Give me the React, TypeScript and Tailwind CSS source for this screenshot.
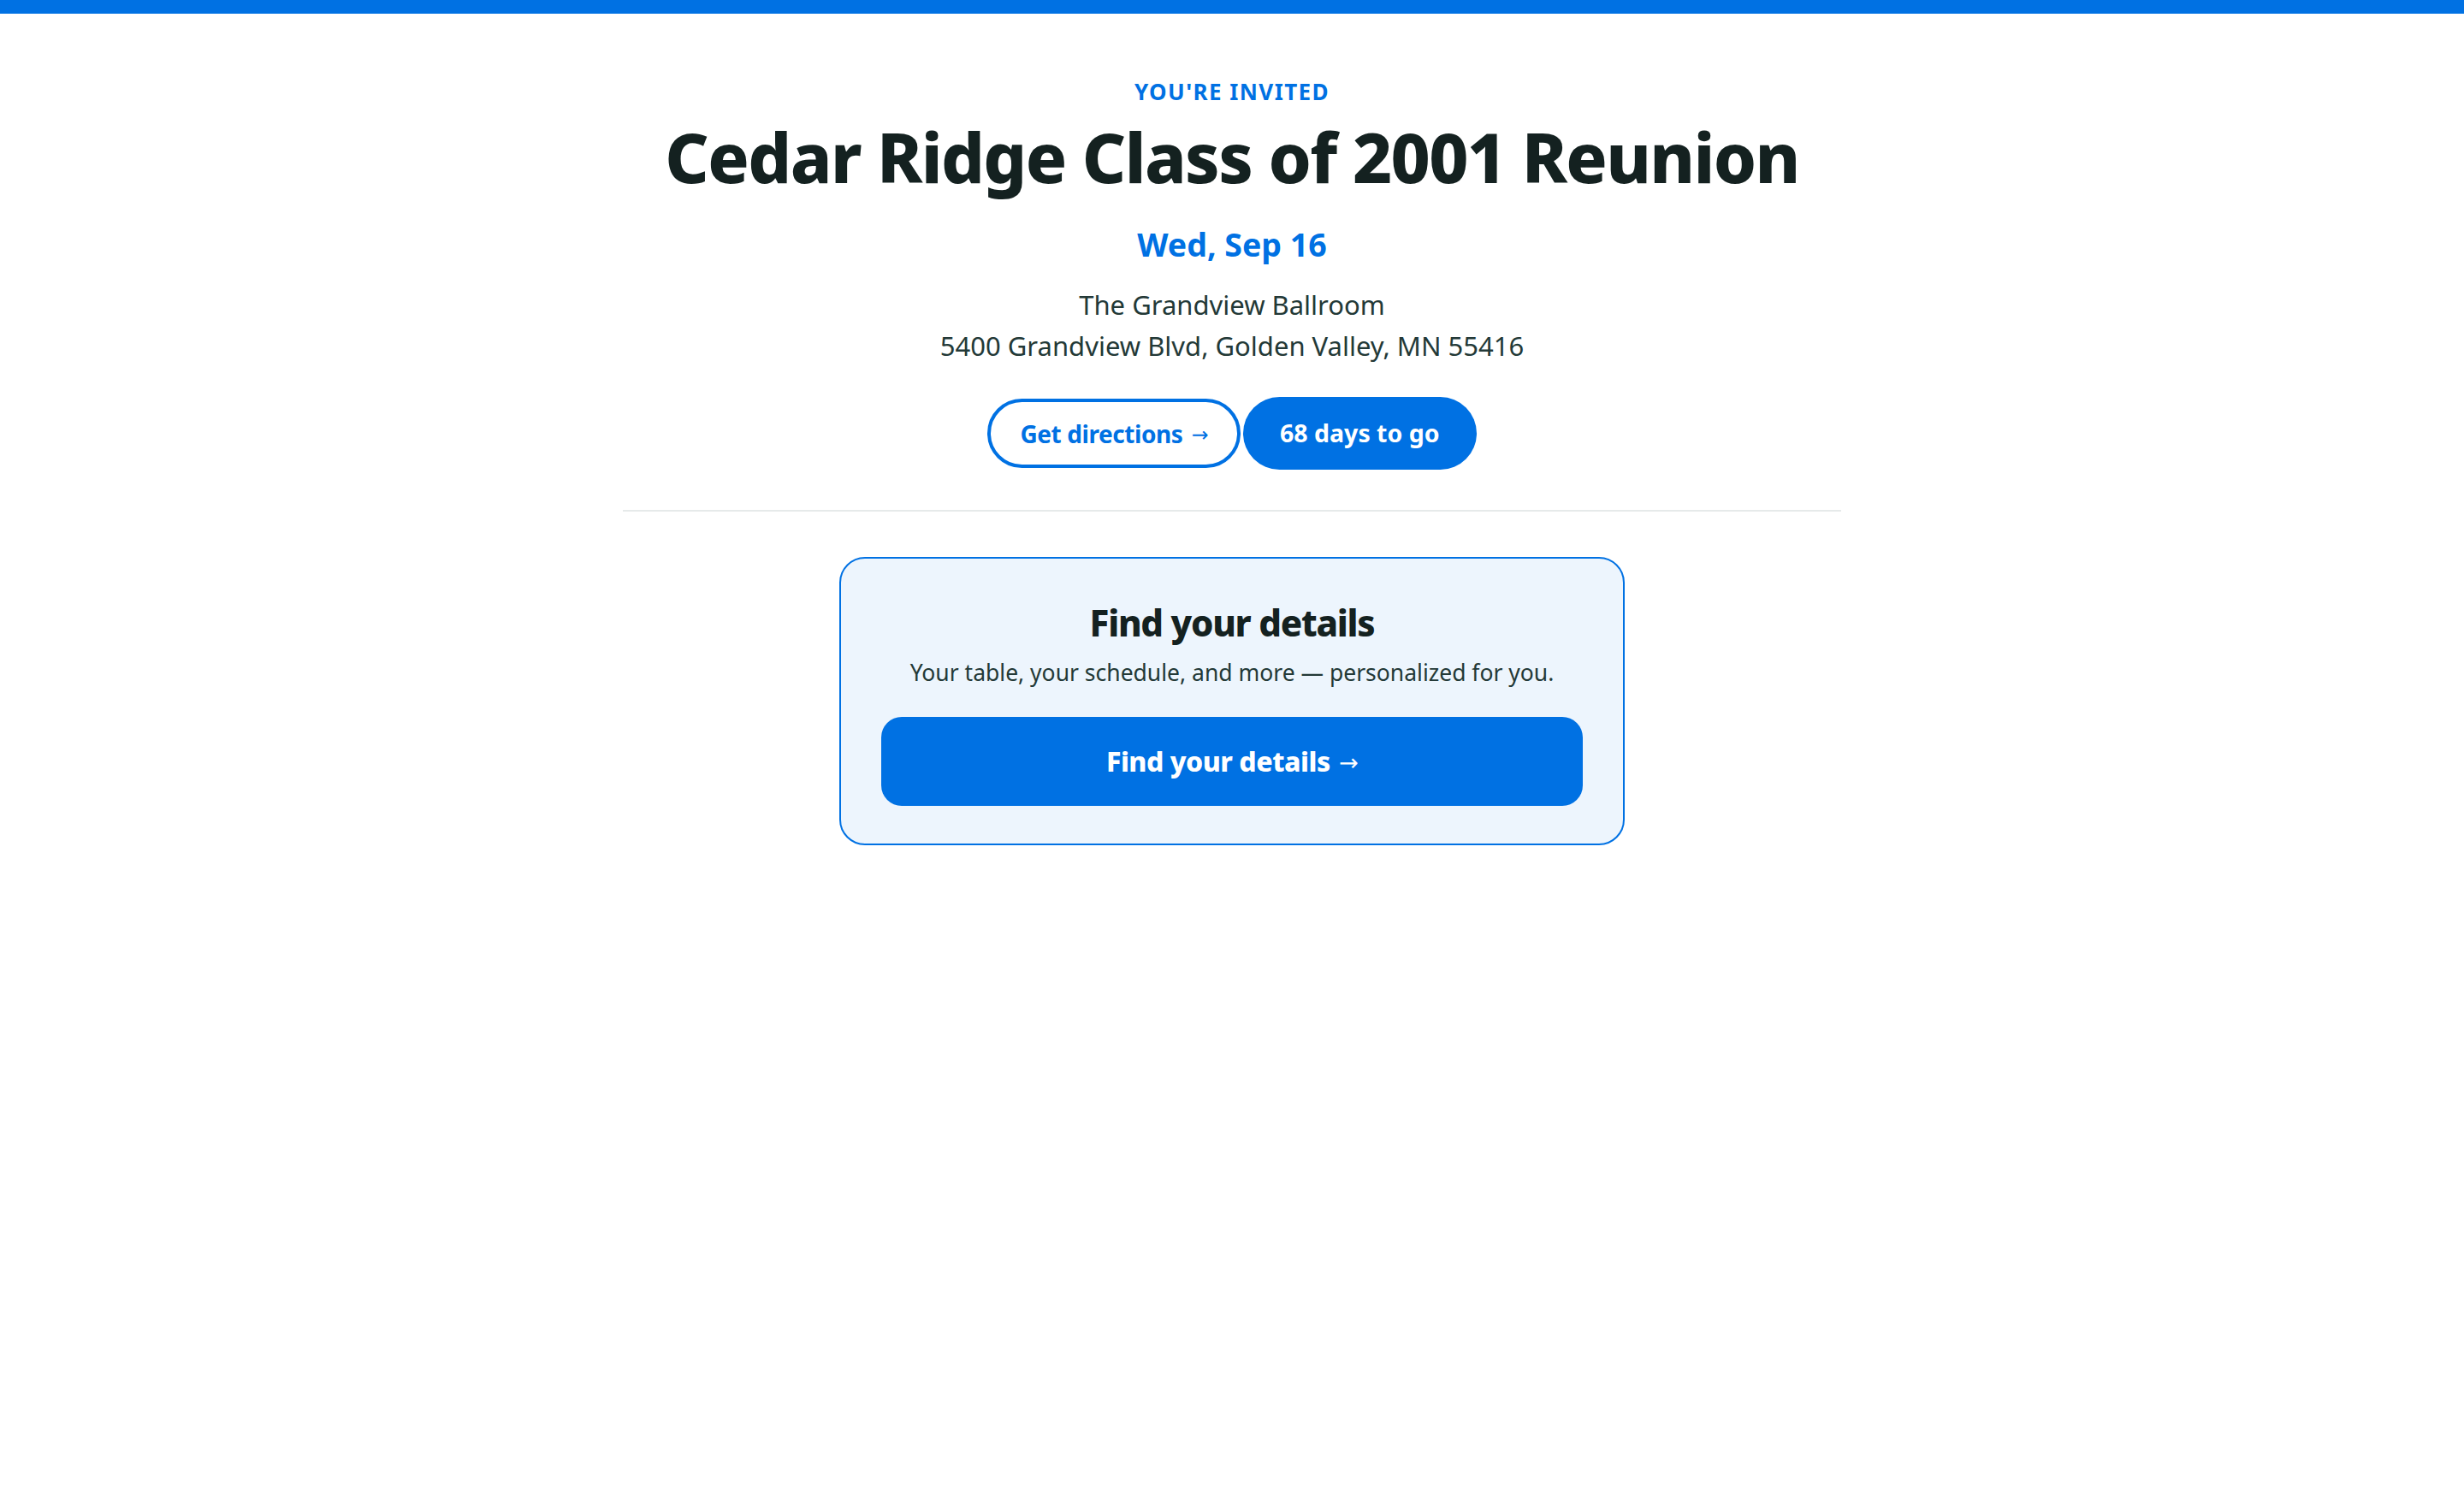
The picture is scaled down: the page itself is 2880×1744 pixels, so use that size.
import React from "react"

const daysToGo = 68

// Arrow glyph from a face whose arrow sits on the x-height centre
function Arrow() {
  return (
    <span className="relative top-[2px] ml-[10px] font-['DejaVu_Sans',sans-serif] text-[0.85em] font-normal">→</span>
  )
}

export default function App() {
  return (
    <div className="min-h-screen bg-white font-['Noto_Sans',sans-serif] text-[#142120]">
      <div className="h-4 bg-[#0071e3]" />

      <main className="mx-auto flex w-[1424px] flex-col items-center">
        <header className="flex flex-col items-center pt-[73px] text-center">
          <span className="text-[26px] font-bold uppercase leading-[36px] tracking-[0.055em] text-[#0071e3]">
            You&apos;re invited
          </span>
          <h1 className="mt-[10px] text-[80px] font-extrabold leading-[96px] tracking-[-0.02em]">
            Cedar Ridge Class of 2001 Reunion
          </h1>
          <p className="mt-[31px] text-[37.5px] font-bold leading-[48px] text-[#0071e3]">Wed, Sep 16</p>
          <div className="mt-[22px] text-[31px] leading-[48px] text-[#233937]">
            <p>The Grandview Ballroom</p>
            <p>5400 Grandview Blvd, Golden Valley, MN 55416</p>
          </div>

          <div className="mt-[36px] flex items-center gap-[3px]">
            <a
              href="#"
              className="flex h-[81px] items-center rounded-full border-4 border-[#0071e3] px-[34px] text-[28px] font-bold tracking-[-0.015em] text-[#0071e3]"
            >
              Get directions
              <Arrow />
            </a>
            <span className="flex h-[85px] items-center rounded-full bg-[#0071e3] px-[43px] text-[28.5px] font-bold text-white">
              {daysToGo} days to go
            </span>
          </div>
        </header>

        <hr className="mt-[47px] w-full border-t-2 border-[#e6eaea]" />

        <section className="mt-[53px] flex w-[918px] flex-col items-center rounded-[30px] border-2 border-[#0071e3] bg-[#edf5fd] px-[47px] pb-[44px] pt-[47px] text-center">
          <h2 className="text-[42px] font-extrabold leading-[56px] tracking-[-0.03em]">Find your details</h2>
          <p className="mt-[10px] text-[26.5px] leading-[40px] text-[#233937]">
            Your table, your schedule, and more — personalized for you.
          </p>
          <button className="mt-[32px] flex h-[104px] w-full items-center justify-center rounded-[24px] bg-[#0071e3] text-[32px] font-extrabold tracking-[-0.015em] text-white">
            Find your details
            <Arrow />
          </button>
        </section>
      </main>
    </div>
  )
}
